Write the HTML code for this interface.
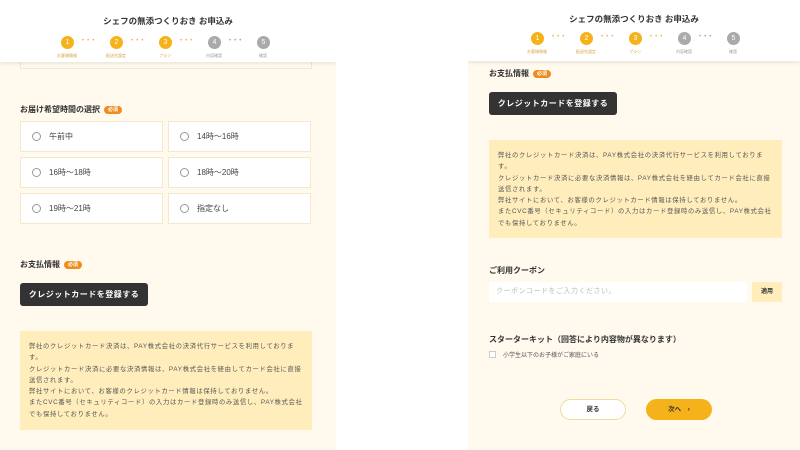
<!DOCTYPE html>
<html><head><meta charset="utf-8"><style>
*{margin:0;padding:0;box-sizing:border-box}
body{width:800px;height:450px;background:#fff;font-family:"Liberation Sans","Noto Sans CJK JP",sans-serif;color:#333;position:relative;overflow:hidden}
.p{position:absolute;top:0;height:450px;background:#fff9ee;overflow:hidden}
.a{position:absolute}
.hd{position:absolute;left:0;top:0;right:0;background:#fff;box-shadow:0 2px 3px rgba(0,0,0,.08)}
.tt{position:absolute;width:100%;text-align:center;font-size:8.5px;font-weight:bold;color:#333}
.c{position:absolute;width:13px;height:13px;border-radius:50%;background:#f5b21a;color:#fff;font-size:7px;text-align:center;line-height:13px}
.c.g{background:#aaa}
.l{position:absolute;font-size:4px;color:#d8a040;width:40px;text-align:center}
.l.g{color:#999}
.d{position:absolute;font-size:6px;color:#e8b84a;letter-spacing:3px}
.h{position:absolute;font-size:8px;font-weight:bold}
.req{display:inline-block;background:#f08c1e;color:#fff;font-size:5px;border-radius:4px;padding:0 4px;margin-left:4px;vertical-align:1px;line-height:8px}
.o{position:absolute;width:143px;height:31px;background:#fff;border:1px solid #f5e8cc;font-size:8px;line-height:29px;padding-left:28px;color:#444}
.o:before{content:"";position:absolute;left:11px;top:10px;width:7px;height:7px;border:1px solid #999;border-radius:50%}
.btn{position:absolute;width:128px;height:23px;background:#333;color:#fff;border-radius:3px;font-size:8px;font-weight:bold;line-height:23px;text-align:center;letter-spacing:.5px}
.info{position:absolute;background:#ffeebc;font-size:6.3px;letter-spacing:.7px;line-height:11.3px;color:#555;padding:10px 9px}
</style></head><body>
<div class="p" style="left:0;width:336px">
 <div class="a" style="left:20px;top:50px;width:292px;height:19px;border:1px solid #f5e8cc;background:#fff9ee"></div>
 <div class="hd" style="height:62px">
  <div class="tt" style="top:15px">シェフの無添つくりおき お申込み</div>
  <div class="c" style="left:61px;top:36px">1</div><div class="d" style="left:82px;top:38px">•••</div>
  <div class="c" style="left:110px;top:36px">2</div><div class="d" style="left:131px;top:38px">•••</div>
  <div class="c" style="left:159px;top:36px">3</div><div class="d" style="left:180px;top:38px">•••</div>
  <div class="c g" style="left:208px;top:36px">4</div><div class="d" style="left:229px;top:38px;color:#aaa">•••</div>
  <div class="c g" style="left:257px;top:36px">5</div>
  <div class="l" style="left:47px;top:53px">お客様情報</div><div class="l" style="left:96px;top:53px">配送先設定</div><div class="l" style="left:145px;top:53px">プラン</div><div class="l g" style="left:194px;top:53px">内容確認</div><div class="l g" style="left:243px;top:53px">確認</div>
 </div>
 <div class="h" style="left:20px;top:104px">お届け希望時間の選択<span class="req">必須</span></div>
 <div class="o" style="left:20px;top:121px">午前中</div><div class="o" style="left:168px;top:121px">14時〜16時</div>
 <div class="o" style="left:20px;top:157px">16時〜18時</div><div class="o" style="left:168px;top:157px">18時〜20時</div>
 <div class="o" style="left:20px;top:193px">19時〜21時</div><div class="o" style="left:168px;top:193px">指定なし</div>
 <div class="h" style="left:20px;top:259px">お支払情報<span class="req">必須</span></div>
 <div class="btn" style="left:20px;top:283px">クレジットカードを登録する</div>
 <div class="info" style="left:20px;top:331px;width:292px;height:99px">弊社のクレジットカード決済は、PAY株式会社の決済代行サービスを利用しております。<br>クレジットカード決済に必要な決済情報は、PAY株式会社を経由してカード会社に直接送信されます。<br>弊社サイトにおいて、お客様のクレジットカード情報は保持しておりません。<br>またCVC番号（セキュリティコード）の入力はカード登録時のみ送信し、PAY株式会社でも保持しておりません。</div>
</div>
<div class="p" style="left:468px;width:332px">
 <div class="hd" style="height:61px">
  <div class="tt" style="top:13px">シェフの無添つくりおき お申込み</div>
  <div class="c" style="left:63px;top:32px">1</div><div class="d" style="left:84px;top:34px">•••</div>
  <div class="c" style="left:112px;top:32px">2</div><div class="d" style="left:133px;top:34px">•••</div>
  <div class="c" style="left:161px;top:32px">3</div><div class="d" style="left:182px;top:34px">•••</div>
  <div class="c g" style="left:210px;top:32px">4</div><div class="d" style="left:231px;top:34px;color:#aaa">•••</div>
  <div class="c g" style="left:259px;top:32px">5</div>
  <div class="l" style="left:49px;top:49px">お客様情報</div><div class="l" style="left:98px;top:49px">配送先設定</div><div class="l" style="left:147px;top:49px">プラン</div><div class="l g" style="left:196px;top:49px">内容確認</div><div class="l g" style="left:245px;top:49px">確認</div>
 </div>
 <div class="h" style="left:21px;top:68px">お支払情報<span class="req">必須</span></div>
 <div class="btn" style="left:21px;top:92px">クレジットカードを登録する</div>
 <div class="info" style="left:21px;top:140px;width:293px;height:98px">弊社のクレジットカード決済は、PAY株式会社の決済代行サービスを利用しております。<br>クレジットカード決済に必要な決済情報は、PAY株式会社を経由してカード会社に直接送信されます。<br>弊社サイトにおいて、お客様のクレジットカード情報は保持しておりません。<br>またCVC番号（セキュリティコード）の入力はカード登録時のみ送信し、PAY株式会社でも保持しておりません。</div>
 <div class="h" style="left:21px;top:265px">ご利用クーポン</div>
 <div class="a" style="left:21px;top:282px;width:258px;height:20px;background:#fff;font-size:7px;color:#bbb;line-height:20px;padding-left:7px;letter-spacing:.5px">クーポンコードをご入力ください。</div>
 <div class="a" style="left:284px;top:282px;width:30px;height:20px;background:#ffeebc;font-size:6px;font-weight:bold;line-height:20px;text-align:center">適用</div>
 <div class="h" style="left:21px;top:334px">スターターキット（回答により内容物が異なります）</div>
 <div class="a" style="left:21px;top:351px;width:7px;height:7px;border:1px solid #ccc;background:#fff"></div>
 <div class="a" style="left:35px;top:350px;font-size:6px;color:#555">小学生以下のお子様がご家庭にいる</div>
 <div class="a" style="left:92px;top:399px;width:66px;height:21px;border:1px solid #f0dc9c;border-radius:11px;background:#fff;font-size:6.5px;font-weight:bold;text-align:center;line-height:19px">戻る</div>
 <div class="a" style="left:178px;top:399px;width:66px;height:21px;border-radius:11px;background:#f5b21a;font-size:6.5px;font-weight:bold;text-align:center;line-height:21px;color:#333">次へ　›</div>
</div>
</body></html>
